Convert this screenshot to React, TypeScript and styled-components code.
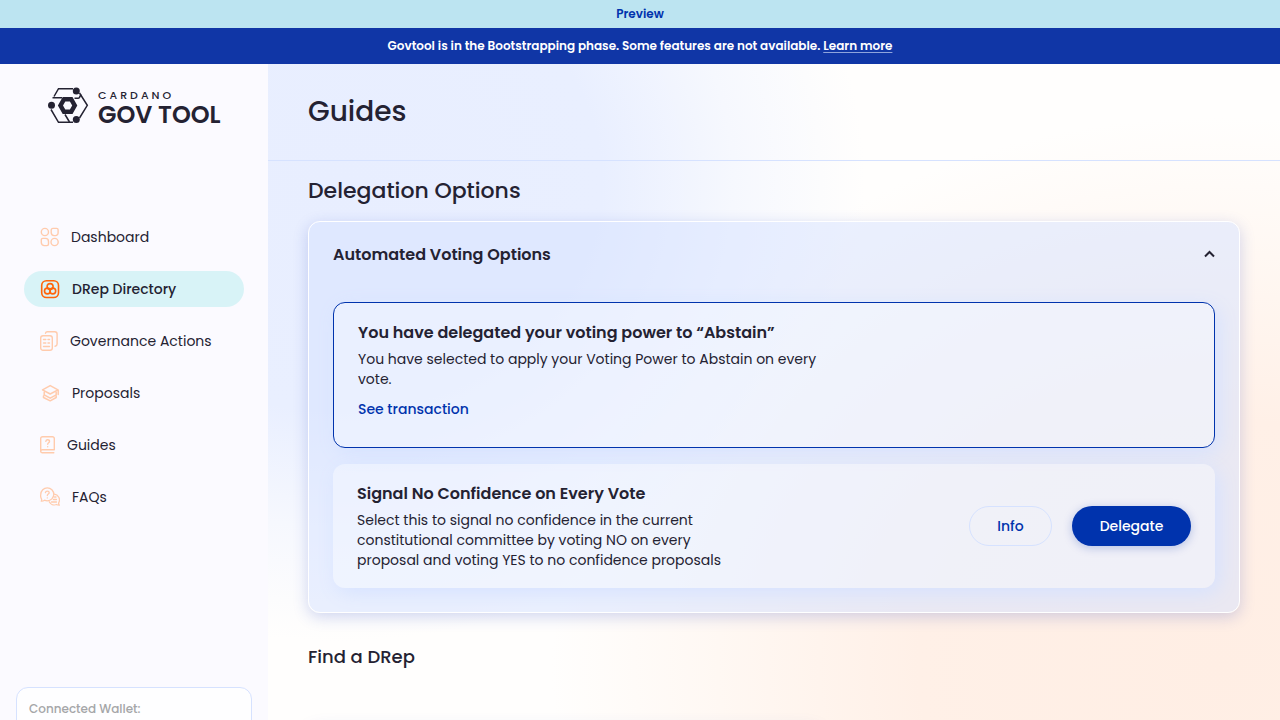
import React from "react";
import styled, { createGlobalStyle, css } from "styled-components";

const ink = "#242232";
const brand = "#0033AD";
const line = "#D6E2FF";

const GlobalStyle = createGlobalStyle`
  *, *::before, *::after { box-sizing: border-box; }
  body {
    margin: 0;
    color: ${ink};
    font-family: Poppins, Inter, "Liberation Sans", sans-serif;
  }
  h1, h2, h3, p, ul { margin: 0; padding: 0; }
  button { font-family: inherit; cursor: pointer; }
`;

const Page = styled.div`
  display: flex;
  flex-direction: column;
  height: 100vh;
  overflow: hidden;
`;

const NetworkBar = styled.div`
  flex: none;
  background: #bce4f1;
  color: ${brand};
  font-size: 12px;
  font-weight: 600;
  line-height: 28px;
  text-align: center;
`;

const NoticeBar = styled.div`
  flex: none;
  background: #1036a6;
  color: #fff;
  font-size: 12px;
  font-weight: 600;
  line-height: 36px;
  text-align: center;
`;

const NoticeLink = styled.a`
  color: inherit;
  text-decoration: underline;
  text-decoration-color: #8fa4dc;
  text-underline-offset: 2px;
`;

const Shell = styled.div`
  display: flex;
  flex: 1;
  min-height: 0;
`;

const Sidebar = styled.aside`
  display: flex;
  flex-direction: column;
  flex: none;
  width: 268px;
  overflow: hidden;
  background: #fbfaff;
`;

const Brand = styled.a`
  display: flex;
  gap: 9px;
  padding: 23px 0 0 48px;
  color: ${ink};
  text-decoration: none;
`;

const Wordmark = styled.span`
  display: flex;
  flex-direction: column;
`;

const WordmarkTop = styled.span`
  font-size: 11px;
  font-weight: 500;
  letter-spacing: 3px;
  line-height: 16px;
`;

const WordmarkMain = styled.span`
  font-size: 24px;
  font-weight: 600;
  line-height: 24px;
  white-space: nowrap;
`;

const NavList = styled.ul`
  display: flex;
  flex-direction: column;
  gap: 16px;
  margin-top: 92px;
  padding: 0 24px;
  list-style: none;
`;

const NavLink = styled.a<{ $active?: boolean }>`
  display: flex;
  align-items: center;
  gap: 12px;
  height: 36px;
  padding: 0 16px;
  border-radius: 18px;
  color: ${ink};
  font-size: 14px;
  font-weight: ${(p) => (p.$active ? 500 : 400)};
  text-decoration: none;
  background: ${(p) => (p.$active ? "#D8F3F7" : "transparent")};

  svg {
    flex: none;
    fill: none;
    stroke: ${(p) => (p.$active ? "#FF640A" : "#FFCBAD")};
    stroke-linecap: round;
    stroke-linejoin: round;
  }
`;

const Wallet = styled.section`
  flex: none;
  height: 120px;
  margin: 172px 16px 0;
  padding: 12px;
  border: 1px solid ${line};
  border-radius: 12px;
  background: #fefeff;
  color: #a5a6a8;
  font-size: 12px;
  font-weight: 500;
  line-height: 18px;
`;

const Main = styled.main`
  flex: 1;
  min-width: 0;
  overflow-y: auto;
  scrollbar-width: none;
  background:
    radial-gradient(ellipse 52% 70% at 7% 18%, #e8eeff 0%, #e9efff 50%, rgba(240, 244, 255, 0.6) 75%, rgba(255, 255, 255, 0) 100%),
    radial-gradient(ellipse 66% 84% at 94% 92%, #ffeee4 0%, #fff0e7 45%, #fff8f3 75%, #fffefd 100%);
`;

const Header = styled.header`
  padding: 24px 40px 0;
  height: 97px;
  border-bottom: 1px solid ${line};
`;

const PageTitle = styled.h1`
  font-size: 28px;
  font-weight: 500;
  line-height: 48px;
`;

const Content = styled.div`
  padding: 14px 40px 40px;
`;

const SectionTitle = styled.h2`
  font-size: 22px;
  font-weight: 500;
  line-height: 32px;
`;

const SubTitle = styled.h2`
  margin-top: 30px;
  font-size: 18px;
  font-weight: 500;
  line-height: 28px;
`;

const Accordion = styled.section`
  margin-top: 14px;
  padding: 0 24px 24px;
  border: 1px solid #fff;
  border-radius: 12px;
  background: rgba(214, 226, 255, 0.5);
  box-shadow: 0 4px 15px rgba(47, 72, 190, 0.22);
`;

const AccordionToggle = styled.button`
  display: flex;
  align-items: center;
  justify-content: space-between;
  width: 100%;
  height: 64px;
  padding: 0;
  border: 0;
  background: none;
  color: ${ink};
  font-size: 16px;
  font-weight: 600;
`;

const OptionStack = styled.div`
  display: flex;
  flex-direction: column;
  gap: 16px;
  margin-top: 16px;
`;

const Option = styled.article<{ $selected?: boolean }>`
  display: flex;
  align-items: center;
  justify-content: space-between;
  padding: ${(p) => (p.$selected ? "18px 24px 28px" : "18px 24px")};
  border: ${(p) => (p.$selected ? `1px solid ${brand}` : "0")};
  border-radius: 12px;
  background: rgba(248, 250, 255, 0.45);
  box-shadow: 4px 5px 20px #d6e2ff;
`;

const OptionBody = styled.div<{ $width: number }>`
  max-width: ${(p) => p.$width}px;
`;

const OptionTitle = styled.h3`
  font-size: 16px;
  font-weight: 600;
  line-height: 24px;
  white-space: nowrap;
`;

const OptionText = styled.p`
  margin-top: 4px;
  font-size: 14px;
  line-height: 20px;
`;

const TextLink = styled.a`
  display: block;
  margin-top: 10px;
  color: ${brand};
  font-size: 14px;
  font-weight: 500;
  line-height: 20px;
  text-decoration: none;
`;

const Actions = styled.div`
  display: flex;
  gap: 20px;
`;

const PillButton = styled.button<{ $primary?: boolean }>`
  height: 40px;
  padding: 0;
  border-radius: 20px;
  font-size: 14px;
  font-weight: 500;
  ${(p) =>
    p.$primary
      ? css`
          width: 119px;
          border: 0;
          background: ${brand};
          color: #fff;
          box-shadow: 0 2px 10px rgba(0, 51, 173, 0.25);
        `
      : css`
          width: 83px;
          border: 1px solid ${line};
          background: transparent;
          color: ${brand};
        `}
`;

const DRepCard = styled.div`
  height: 120px;
  width: 55%;
  margin-top: 57px;
  border-radius: 12px;
  background: rgba(255, 255, 255, 0.5);
  box-shadow: 0 4px 20px rgba(47, 72, 190, 0.18);
`;

const LogoMark = () => (
  <svg width="41" height="37" viewBox="0 0 41 37" fill="none" stroke={ink} strokeWidth="1.5" aria-hidden="true">
    <path d="M6 9.500 10.500 1.700H25M31.500 6 39.300 18.300 31.500 31M25 35.300H10.500L3 22.500" />
    <path d="M4.500 10.700H14M26.500 11.300h3.500q1 0 1.500-1l1.500-3M17 27.500l4.500 7.500" />
    <circle cx="28.300" cy="4" r="3.500" fill={ink} stroke="none" />
    <circle cx="3.500" cy="18.300" r="3.500" fill={ink} stroke="none" />
    <circle cx="28.300" cy="32.500" r="3.500" fill={ink} stroke="none" />
    <path
      fill={ink}
      fillRule="evenodd"
      stroke="none"
      d="M14.700 10h9.800l4.800 8.500-4.800 8.500h-9.800l-4.800-8.500zM17.300 14.500l-2.300 4 2.300 4h4.600l2.300-4-2.300-4z"
    />
  </svg>
);

const DashboardIcon = () => (
  <svg width="19" height="20" viewBox="0 0 19 20" strokeWidth="1.400" aria-hidden="true">
    <circle cx="4.900" cy="5" r="3.600" />
    <path d="M13 1.400h3.600A1.500 1.500 0 0 1 18.100 2.900V6a2.600 2.600 0 0 1-2.600 2.600h-1.300A3 3 0 0 1 11.200 5.600V3.200A1.800 1.800 0 0 1 13 1.400z" />
    <path d="M2.800 11.400H5.500a3 3 0 0 1 3 3v2.700a1.500 1.500 0 0 1-1.500 1.500H4.300a3 3 0 0 1-3-3v-2.700a1.500 1.500 0 0 1 1.500-1.500z" />
    <circle cx="14.600" cy="15" r="3.600" />
  </svg>
);

const DirectoryIcon = () => (
  <svg width="20" height="20" viewBox="0 0 20 20" strokeWidth="1.600" aria-hidden="true">
    <rect x="1.700" y="1.700" width="16.800" height="16.800" rx="4.800" />
    <circle cx="10.100" cy="7.600" r="3" />
    <circle cx="7.400" cy="12" r="2.900" />
    <circle cx="12.800" cy="12" r="2.900" />
  </svg>
);

const ActionsIcon = () => (
  <svg width="18" height="20" viewBox="0 0 18 20" strokeWidth="1.400" aria-hidden="true">
    <path d="M5.500 2.200c.2-.9.900-1.500 1.800-1.500h7.500c1.300 0 2.300 1 2.300 2.300v10c0 1.300-.8 2.100-2 2.300" />
    <rect x=".7" y="4.700" width="11.600" height="14.600" rx="2.300" />
    <path d="M3.500 8.500h2.300M8 8.500h1.500M3.500 12h2.300M8 12h1.500M3.500 15.500h6" />
  </svg>
);

const ProposalsIcon = () => (
  <svg width="20" height="20" viewBox="0 0 20 20" strokeWidth="1.500" aria-hidden="true">
    <path d="M2.500 6.800 10.200 2.600 18 6.800l-7.800 4.200zM18.200 7v4.500M4.200 9.200v2.600l6 3.400 6-3.400V9.200M3.500 13v1.500l6.700 3.300 6-3.300V13" />
  </svg>
);

const GuidesIcon = () => (
  <svg width="15" height="18" viewBox="0 0 15 18" strokeWidth="1.400" aria-hidden="true">
    <path d="M14.300 13.700V2.500A1.800 1.800 0 0 0 12.500.7H2.500A1.800 1.800 0 0 0 .7 2.500v12.700M14.300 13.700H2.200a1.500 1.500 0 0 0-1.500 1.500 1.600 1.600 0 0 0 1.600 1.600h11.500" />
    <path d="M5.800 5.300c.2-1 .9-1.500 1.800-1.500s1.900.6 1.900 1.600c0 1.300-1.800 1.400-1.800 2.800M7.700 10.600v.1" />
  </svg>
);

const FaqIcon = () => (
  <svg width="20" height="20" viewBox="0 0 20 20" strokeWidth="1.300" aria-hidden="true">
    <path d="M1.300 14.200c.5-.8.400-1.500.2-2.200A6.400 6.400 0 0 1 .8 7.300a6.500 6.500 0 1 1 6.500 6.500c-1 0-1.900-.2-2.700-.6-.9.700-2 1-3.300 1z" />
    <path d="M14.200 7.200a5.700 5.700 0 0 1 4.500 8.500c-.2.900 0 1.700.6 2.500-1.200 0-2-.2-2.900-.7a5.700 5.700 0 0 1-7.200-2.700" />
    <path d="M5.400 5.600c.2-1 .9-1.500 1.900-1.500s1.900.6 1.900 1.600c0 1.300-1.900 1.400-1.900 2.800M7.300 10.800v.1M14.500 10h1.500M13.500 12.500h3M11.500 15h5" />
  </svg>
);

const navItems = [
  { label: "Dashboard", Icon: DashboardIcon },
  { label: "DRep Directory", Icon: DirectoryIcon, active: true },
  { label: "Governance Actions", Icon: ActionsIcon },
  { label: "Proposals", Icon: ProposalsIcon },
  { label: "Guides", Icon: GuidesIcon },
  { label: "FAQs", Icon: FaqIcon },
];

export default function App() {
  const [open, setOpen] = React.useState(true);
  return (
    <Page>
      <GlobalStyle />
      <NetworkBar>Preview</NetworkBar>
      <NoticeBar>
        Govtool is in the Bootstrapping phase. Some features are not available.{" "}
        <NoticeLink href="#learn">Learn more</NoticeLink>
      </NoticeBar>
      <Shell>
        <Sidebar>
          <Brand href="#home">
            <LogoMark />
            <Wordmark>
              <WordmarkTop>CARDANO</WordmarkTop>
              <WordmarkMain>GOV TOOL</WordmarkMain>
            </Wordmark>
          </Brand>
          <nav>
            <NavList>
              {navItems.map(({ label, Icon, active }) => (
                <li key={label}>
                  <NavLink href="#nav" $active={active} aria-current={active ? "page" : undefined}>
                    <Icon />
                    {label}
                  </NavLink>
                </li>
              ))}
            </NavList>
          </nav>
          <Wallet>Connected Wallet:</Wallet>
        </Sidebar>
        <Main>
          <Header>
            <PageTitle>Guides</PageTitle>
          </Header>
          <Content>
            <SectionTitle>Delegation Options</SectionTitle>
            <Accordion>
              <AccordionToggle type="button" aria-expanded={open} onClick={() => setOpen(!open)}>
                Automated Voting Options
                <svg width="11" height="8" viewBox="0 0 11 8" fill="none" stroke={ink} strokeWidth="2" aria-hidden="true">
                  <path d="M1 6.500 5.500 2 10 6.500" />
                </svg>
              </AccordionToggle>
              {open && (
                <OptionStack>
                  <Option $selected>
                    <OptionBody $width={480}>
                      <OptionTitle>You have delegated your voting power to “Abstain”</OptionTitle>
                      <OptionText>You have selected to apply your Voting Power to Abstain on every vote.</OptionText>
                      <TextLink href="#transaction">See transaction</TextLink>
                    </OptionBody>
                  </Option>
                  <Option>
                    <OptionBody $width={370}>
                      <OptionTitle>Signal No Confidence on Every Vote</OptionTitle>
                      <OptionText>
                        Select this to signal no confidence in the current constitutional committee by voting NO on
                        every proposal and voting YES to no confidence proposals
                      </OptionText>
                    </OptionBody>
                    <Actions>
                      <PillButton type="button">Info</PillButton>
                      <PillButton type="button" $primary>
                        Delegate
                      </PillButton>
                    </Actions>
                  </Option>
                </OptionStack>
              )}
            </Accordion>
            <SubTitle>Find a DRep</SubTitle>
            <DRepCard />
          </Content>
        </Main>
      </Shell>
    </Page>
  );
}
